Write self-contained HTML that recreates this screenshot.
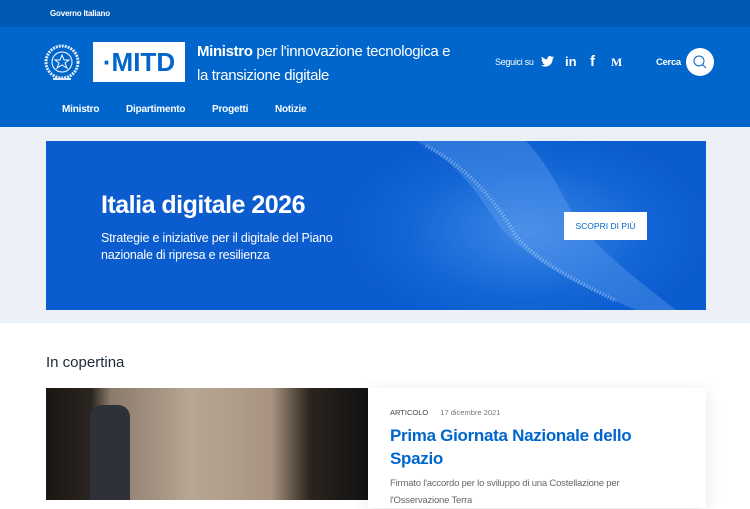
<!DOCTYPE html>
<html><head><meta charset="utf-8"><style>
*{margin:0;padding:0;box-sizing:border-box}
body{width:750px;height:500px;overflow:hidden;font-family:"Liberation Sans",sans-serif;background:#fff;position:relative}
.top{position:absolute;left:0;top:0;width:750px;height:27px;background:#0059b3;color:#fff;font-size:8px;font-weight:bold;padding:9px 0 0 50px;letter-spacing:-.2px}
.hdr{position:absolute;left:0;top:27px;width:750px;height:100px;background:#0066cc;color:#fff}
.a{position:absolute}
.band{position:absolute;left:0;top:127px;width:750px;height:196px;background:#ebf0f6}
.hero{position:absolute;left:46px;top:141px;width:660px;height:169px;background:radial-gradient(ellipse 180px 100px at 480px 90px,#3b86e6,#1466d6 65%,#0b5ccf);overflow:hidden}
.nav{font-size:10px;font-weight:bold;letter-spacing:-.2px}
</style></head><body>
<div class="top">Governo Italiano</div>
<div class="hdr">
 <svg class="a" style="left:43px;top:15px" width="38" height="42" viewBox="0 0 38 42"><circle cx="19" cy="20" r="16" fill="none" stroke="#dfe9f7" stroke-width="3" stroke-dasharray="2 1"/><circle cx="19" cy="20" r="10" fill="none" stroke="#dfe9f7" stroke-width="1.2"/><polygon points="19,13 21,18 26,18 22,21 24,26 19,23 14,26 16,21 12,18 17,18" fill="none" stroke="#fff" stroke-width="1"/><path d="M10 37 L28 37" stroke="#dfe9f7" stroke-width="2"/></svg>
 <div class="a" style="left:93px;top:15px;width:92px;height:40px;background:#fff;color:#0066cc;font-size:26px;font-weight:bold;text-align:center;line-height:40px">·MITD</div>
 <div class="a" style="left:197px;top:13px;font-size:15px;line-height:24px;width:262px;letter-spacing:-.35px"><b>Ministro</b> per l'innovazione tecnologica e la transizione digitale</div>
 <div class="a" style="left:495px;top:30px;font-size:9px;letter-spacing:-.3px">Seguici su</div>
 <svg class="a" style="left:541px;top:29px" width="13" height="11" viewBox="0 0 24 20"><path fill="#fff" d="M24 2.4a10 10 0 0 1-2.8.8A5 5 0 0 0 23.3.4a10 10 0 0 1-3.1 1.2A4.9 4.9 0 0 0 11.8 6 14 14 0 0 1 1.7.9a4.9 4.9 0 0 0 1.5 6.6A4.9 4.9 0 0 1 1 6.9a4.9 4.9 0 0 0 3.9 4.9 5 5 0 0 1-2.2.1 4.9 4.9 0 0 0 4.6 3.4A9.9 9.9 0 0 1 0 17.3 14 14 0 0 0 7.5 19.5c9 0 14-7.5 14-14v-.6A10 10 0 0 0 24 2.4z"/></svg>
 <div class="a" style="left:565px;top:27px;font-size:13px;font-weight:bold">in</div>
 <div class="a" style="left:590px;top:26px;font-size:15px;font-weight:bold">f</div>
 <div class="a" style="left:611px;top:28px;font-size:12px;font-weight:bold;font-family:'Liberation Serif',serif">M</div>
 <div class="a" style="left:656px;top:30px;font-size:9.5px;font-weight:bold;letter-spacing:-.3px">Cerca</div>
 <div class="a" style="left:686px;top:21px;width:28px;height:28px;border-radius:50%;background:#fff"><svg width="28" height="28"><circle cx="13" cy="13" r="5" fill="none" stroke="#0066cc" stroke-width="1"/><path d="M16.5 16.5L20 20" stroke="#0066cc" stroke-width="1"/></svg></div>
 <div class="a nav" style="left:62px;top:77px">Ministro</div>
 <div class="a nav" style="left:126px;top:77px">Dipartimento</div>
 <div class="a nav" style="left:212px;top:77px">Progetti</div>
 <div class="a nav" style="left:275px;top:77px">Notizie</div>
</div>
<div class="band"></div>
<div class="hero">
 <svg class="a" style="left:300px;top:0" width="360" height="169"><path d="M70 0 C110 20 130 50 150 80 C170 110 220 140 290 169 L330 169 C280 130 240 100 220 60 C205 30 190 10 180 0Z" fill="#6aa6f2" opacity=".35"/><path d="M80 5 C120 25 150 60 170 95 C190 120 230 140 270 160" stroke="#dbeaff" stroke-width="4" fill="none" opacity=".45" stroke-dasharray="1 2"/></svg>
 <div class="a" style="left:55px;top:50px;color:#fff;font-size:25px;font-weight:bold;letter-spacing:-.5px">Italia digitale 2026</div>
 <div class="a" style="left:55px;top:89px;color:#fff;font-size:12.5px;line-height:17px;width:270px;letter-spacing:-.2px">Strategie e iniziative per il digitale del Piano nazionale di ripresa e resilienza</div>
 <div class="a" style="left:518px;top:71px;width:83px;height:28px;background:#fff;color:#0066cc;font-size:8.5px;text-align:center;line-height:28px">SCOPRI DI PIÙ</div>
</div>
<div class="a" style="left:46px;top:354px;font-size:15px;color:#1a2a3a">In copertina</div>
<div class="a" style="left:368px;top:388px;width:338px;height:120px;background:#fff;box-shadow:0 4px 16px rgba(0,0,0,.1)"></div>
<div class="a" style="left:46px;top:388px;width:322px;height:112px;background:linear-gradient(90deg,#1a1612 0,#2a2520 14%,#8a7a6a 20%,#b8a694 45%,#a89480 70%,#2a241e 82%,#111 100%)"></div>
<div class="a" style="left:90px;top:405px;width:40px;height:95px;background:#2e3238;border-radius:12px 12px 0 0"></div>
<div class="a" style="left:390px;top:408px;font-size:7.5px;color:#444">ARTICOLO <span style="margin-left:10px;color:#777">17 dicembre 2021</span></div>
<div class="a" style="left:390px;top:424px;font-size:17px;font-weight:bold;color:#0066cc;line-height:23px;width:290px;letter-spacing:-.3px">Prima Giornata Nazionale dello Spazio</div>
<div class="a" style="left:390px;top:475px;font-size:9.5px;color:#666;line-height:17px;width:290px;letter-spacing:-.2px">Firmato l'accordo per lo sviluppo di una Costellazione per l'Osservazione Terra</div>
</body></html>
